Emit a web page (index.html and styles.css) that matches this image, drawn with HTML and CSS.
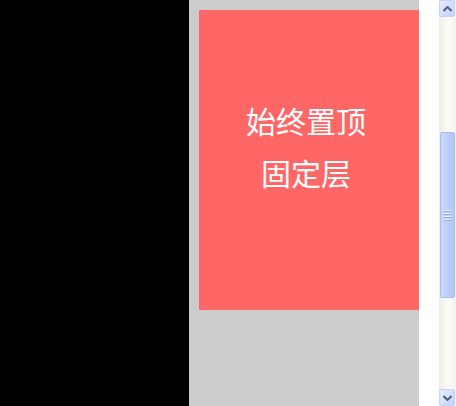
FILE: index.html
```html
<!DOCTYPE html>
<html>
<head>
<meta charset="utf-8">
<link rel="stylesheet" href="styles.css">
</head>
<body>
<div class="frame">
  <div class="side"></div>
  <div class="main">
    <div class="fixed-box">
      <p class="line">始终置顶</p>
      <p class="line">固定层</p>
    </div>
  </div>
  <div class="gutter"></div>
  <div class="scrollbar">
    <div class="btn btn-up">
      <svg width="9" height="6" viewBox="0 0 9 6"><path d="M0.5 5 L4.5 1 L8.5 5" fill="none" stroke="#4d6185" stroke-width="2"/></svg>
    </div>
    <div class="track">
      <div class="thumb">
        <div class="grip"><span></span><span></span><span></span><span></span></div>
      </div>
    </div>
    <div class="btn btn-down">
      <svg width="9" height="6" viewBox="0 0 9 6"><path d="M0.5 1 L4.5 5 L8.5 1" fill="none" stroke="#4d6185" stroke-width="2"/></svg>
    </div>
  </div>
</div>
</body>
</html>
```
FILE: styles.css
```css
html, body {
  margin: 0;
  padding: 0;
  width: 456px;
  height: 406px;
  overflow: hidden;
  background: #fff;
}
.frame {
  display: flex;
  width: 456px;
  height: 406px;
}
.side {
  width: 189px;
  background: #000;
  flex: none;
}
.main {
  width: 220px;
  padding: 10px 0 0 10px;
  background: #cccccc;
  flex: none;
}
.fixed-box {
  width: 220px;
  height: 300px;
  box-sizing: border-box;
  padding: 84px 6px 0 0;
  background: #ff6666;
  color: #fff;
  text-align: center;
  font-family: "Noto Sans CJK SC", "Noto Sans", sans-serif;
  font-size: 30px;
  line-height: 52px;
}
.line {
  margin: 0;
}
.gutter {
  width: 20px;
  background: #fff;
  flex: none;
}
.scrollbar {
  width: 17px;
  flex: none;
  display: flex;
  flex-direction: column;
  background: linear-gradient(to right, #eeede5, #fcfcf9 60%, #f3f2ec);
}
.btn {
  height: 17px;
  box-sizing: border-box;
  margin: 0 1px 0 0;
  border: 1px solid #c3d3fd;
  border-radius: 2px;
  background: linear-gradient(135deg, #e6eefc, #c1d3fb);
  display: flex;
  align-items: center;
  justify-content: center;
  flex: none;
}
.track {
  flex: 1;
  padding: 115px 1px 0 1px;
}
.thumb {
  height: 166px;
  box-sizing: border-box;
  border: 1px solid #a8bdf6;
  border-radius: 2px;
  background: linear-gradient(to right, #c9d8fc, #bccffb 50%, #b4c8f6);
  display: flex;
  align-items: center;
  justify-content: center;
}
.grip {
  display: flex;
  flex-direction: column;
  gap: 1px;
}
.grip span {
  display: block;
  width: 7px;
  height: 1px;
  background: #eef3fe;
  border-bottom: 1px solid #8ca8e8;
}
```
